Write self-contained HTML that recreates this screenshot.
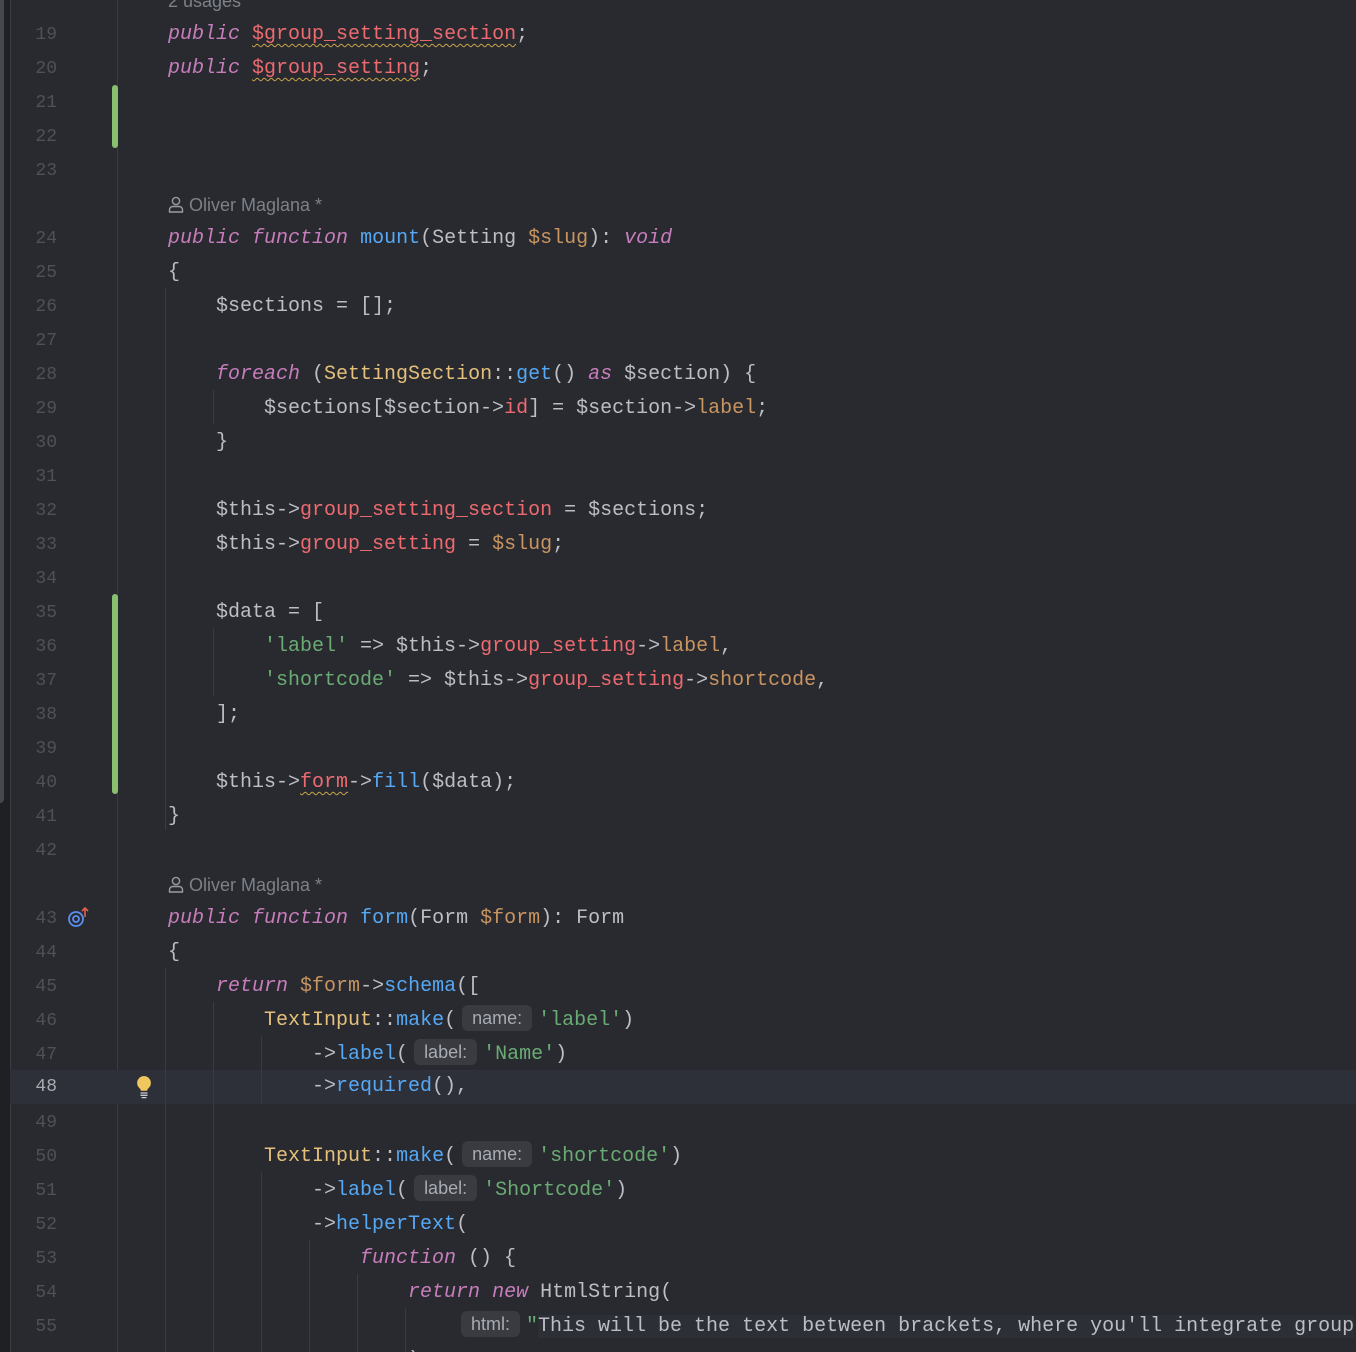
<!DOCTYPE html>
<html style="overflow:hidden;height:1352px"><head><meta charset="utf-8"><style>
html,body{margin:0;padding:0}
body{width:1356px;height:1352px;background:#282a30;position:relative;overflow:hidden;font-family:"Liberation Mono",monospace;font-size:20px;color:#bcbec4}
.r{position:absolute;left:0;height:34px;line-height:34px;white-space:pre;margin-top:2px}
.c{position:absolute;left:168px;top:0}
.n{position:absolute;left:0;width:57px;text-align:right;color:#4e5158;font-size:18px}
.k{color:#c77dbb;font-style:italic}
.f{color:#ed6a6f}
.fn{color:#56a8f5}
.cl{color:#e5c07b}
.o{color:#c89460}
.s{color:#6aab73}
.w{text-decoration:underline wavy #c9a548;text-decoration-thickness:1px;text-underline-offset:4px}
.h{display:inline-block;font-family:"Liberation Sans",sans-serif;font-size:18px;color:#a8abb2;background:#393b41;border-radius:6px;height:26px;line-height:26px;padding:0 10px;margin:0 6px 0 6px;vertical-align:1px}
.au{font-family:"Liberation Sans",sans-serif;font-size:18px;color:#7d8087}
.g{position:absolute;width:1px;background:#393b41}
.gr{position:absolute;left:112px;width:6px;background:#88c070;border-radius:3px}
</style></head><body>
<div style="position:absolute;left:0;top:0;width:10px;height:1352px;background:#1f2024"></div>
<div style="position:absolute;left:0;top:0;width:4px;height:803px;background:#45474d;border-radius:0 0 4px 0"></div>
<div style="position:absolute;left:10px;top:0;width:1px;height:1352px;background:#393b41"></div>
<div style="position:absolute;left:117px;top:0;width:1px;height:1352px;background:#393b41"></div>
<div style="position:absolute;left:10px;top:1070px;width:1346px;height:34px;background:#2e3039"></div>
<div class="gr" style="top:85px;height:63px"></div>
<div class="gr" style="top:594px;height:200px"></div>
<div class="g" style="left:165px;top:288px;height:542px"></div>
<div class="g" style="left:165px;top:968px;height:384px"></div>
<div class="g" style="left:213px;top:390px;height:34px"></div>
<div class="g" style="left:213px;top:628px;height:68px"></div>
<div class="g" style="left:213px;top:1002px;height:350px"></div>
<div class="g" style="left:261px;top:1036px;height:68px"></div>
<div class="g" style="left:261px;top:1172px;height:180px"></div>
<div class="g" style="left:309px;top:1240px;height:112px"></div>
<div class="g" style="left:357px;top:1274px;height:78px"></div>
<div class="g" style="left:405px;top:1308px;height:44px"></div>

<div class="r" style="top:-18px"><span class="c au">2 usages</span></div>
<div class="r" style="top:16px"><span class="n">19</span><span class="c"><span class="k">public</span> <span class="f w">$group_setting_section</span>;</span></div>
<div class="r" style="top:50px"><span class="n">20</span><span class="c"><span class="k">public</span> <span class="f w">$group_setting</span>;</span></div>
<div class="r" style="top:84px"><span class="n">21</span></div>
<div class="r" style="top:118px"><span class="n">22</span></div>
<div class="r" style="top:152px"><span class="n">23</span></div>
<div class="r" style="top:186px"><span class="c au"><svg width="16" height="17" viewBox="0 0 16 17" style="vertical-align:-2px"><circle cx="8" cy="5" r="3.6" fill="none" stroke="#9a9da4" stroke-width="1.4"/><path d="M1.5 16v-2.2c0-2 1.6-3.3 3.5-3.3h6c1.9 0 3.5 1.3 3.5 3.3V16z" fill="none" stroke="#9a9da4" stroke-width="1.4"/></svg> Oliver Maglana *</span></div>
<div class="r" style="top:220px"><span class="n">24</span><span class="c"><span class="k">public</span> <span class="k">function</span> <span class="fn">mount</span>(Setting <span class="o">$slug</span>): <span class="k">void</span></span></div>
<div class="r" style="top:254px"><span class="n">25</span><span class="c">{</span></div>
<div class="r" style="top:288px"><span class="n">26</span><span class="c">    $sections = [];</span></div>
<div class="r" style="top:322px"><span class="n">27</span></div>
<div class="r" style="top:356px"><span class="n">28</span><span class="c">    <span class="k">foreach</span> (<span class="cl">SettingSection</span>::<span class="fn">get</span>() <span class="k">as</span> $section) {</span></div>
<div class="r" style="top:390px"><span class="n">29</span><span class="c">        $sections[$section-&gt;<span class="f">id</span>] = $section-&gt;<span class="o">label</span>;</span></div>
<div class="r" style="top:424px"><span class="n">30</span><span class="c">    }</span></div>
<div class="r" style="top:458px"><span class="n">31</span></div>
<div class="r" style="top:492px"><span class="n">32</span><span class="c">    $this-&gt;<span class="f">group_setting_section</span> = $sections;</span></div>
<div class="r" style="top:526px"><span class="n">33</span><span class="c">    $this-&gt;<span class="f">group_setting</span> = <span class="o">$slug</span>;</span></div>
<div class="r" style="top:560px"><span class="n">34</span></div>
<div class="r" style="top:594px"><span class="n">35</span><span class="c">    $data = [</span></div>
<div class="r" style="top:628px"><span class="n">36</span><span class="c">        <span class="s">'label'</span> =&gt; $this-&gt;<span class="f">group_setting</span>-&gt;<span class="o">label</span>,</span></div>
<div class="r" style="top:662px"><span class="n">37</span><span class="c">        <span class="s">'shortcode'</span> =&gt; $this-&gt;<span class="f">group_setting</span>-&gt;<span class="o">shortcode</span>,</span></div>
<div class="r" style="top:696px"><span class="n">38</span><span class="c">    ];</span></div>
<div class="r" style="top:730px"><span class="n">39</span></div>
<div class="r" style="top:764px"><span class="n">40</span><span class="c">    $this-&gt;<span class="f w">form</span>-&gt;<span class="fn">fill</span>($data);</span></div>
<div class="r" style="top:798px"><span class="n">41</span><span class="c">}</span></div>
<div class="r" style="top:832px"><span class="n">42</span></div>
<div class="r" style="top:866px"><span class="c au"><svg width="16" height="17" viewBox="0 0 16 17" style="vertical-align:-2px"><circle cx="8" cy="5" r="3.6" fill="none" stroke="#9a9da4" stroke-width="1.4"/><path d="M1.5 16v-2.2c0-2 1.6-3.3 3.5-3.3h6c1.9 0 3.5 1.3 3.5 3.3V16z" fill="none" stroke="#9a9da4" stroke-width="1.4"/></svg> Oliver Maglana *</span></div>
<div class="r" style="top:900px"><span class="n">43</span><svg style="position:absolute;left:67px;top:4px" width="24" height="22" viewBox="0 0 24 22"><circle cx="9" cy="13" r="7" fill="none" stroke="#5b8ff0" stroke-width="1.8"/><circle cx="9" cy="13" r="3" fill="none" stroke="#5b8ff0" stroke-width="1.8"/><path d="M18 11V2M15 5l3-3 3 3" fill="none" stroke="#e0604f" stroke-width="1.6"/></svg><span class="c"><span class="k">public</span> <span class="k">function</span> <span class="fn">form</span>(Form <span class="o">$form</span>): Form</span></div>
<div class="r" style="top:934px"><span class="n">44</span><span class="c">{</span></div>
<div class="r" style="top:968px"><span class="n">45</span><span class="c">    <span class="k">return</span> <span class="o">$form</span>-&gt;<span class="fn">schema</span>([</span></div>
<div class="r" style="top:1002px"><span class="n">46</span><span class="c">        <span class="cl">TextInput</span>::<span class="fn">make</span>(<span class="h">name:</span><span class="s">'label'</span>)</span></div>
<div class="r" style="top:1036px"><span class="n">47</span><span class="c">            -&gt;<span class="fn">label</span>(<span class="h">label:</span><span class="s">'Name'</span>)</span></div>
<div class="r" style="top:1068px"><span class="n" style="color:#a9abb0">48</span><svg style="position:absolute;left:135px;top:5px" width="18" height="24" viewBox="0 0 18 24"><path d="M9 1a7 7 0 0 0-4.5 12.3c.8.7 1.3 1.5 1.3 2.4h6.4c0-.9.5-1.7 1.3-2.4A7 7 0 0 0 9 1z" fill="#f0c75e"/><path d="M5.5 18h7M5.5 20.3h7M6.5 22.6h5" stroke="#c9cbd0" stroke-width="1.3"/></svg><span class="c">            -&gt;<span class="fn">required</span>(),</span></div>
<div class="r" style="top:1104px"><span class="n">49</span></div>
<div class="r" style="top:1138px"><span class="n">50</span><span class="c">        <span class="cl">TextInput</span>::<span class="fn">make</span>(<span class="h">name:</span><span class="s">'shortcode'</span>)</span></div>
<div class="r" style="top:1172px"><span class="n">51</span><span class="c">            -&gt;<span class="fn">label</span>(<span class="h">label:</span><span class="s">'Shortcode'</span>)</span></div>
<div class="r" style="top:1206px"><span class="n">52</span><span class="c">            -&gt;<span class="fn">helperText</span>(</span></div>
<div class="r" style="top:1240px"><span class="n">53</span><span class="c">                <span class="k">function</span> () {</span></div>
<div class="r" style="top:1274px"><span class="n">54</span><span class="c">                    <span class="k">return</span> <span class="k">new</span> HtmlString(</span></div>
<div class="r" style="top:1308px"><span class="n">55</span><span class="c" style="left:455px"><span class="h">html:</span><span class="s">"</span><span style="background:#2d2f36">This will be the text between brackets, where you'll integrate group</span></span></div>
<div class="r" style="top:1342px"><span class="n">56</span><span class="c">                    );</span></div>
</body></html>
